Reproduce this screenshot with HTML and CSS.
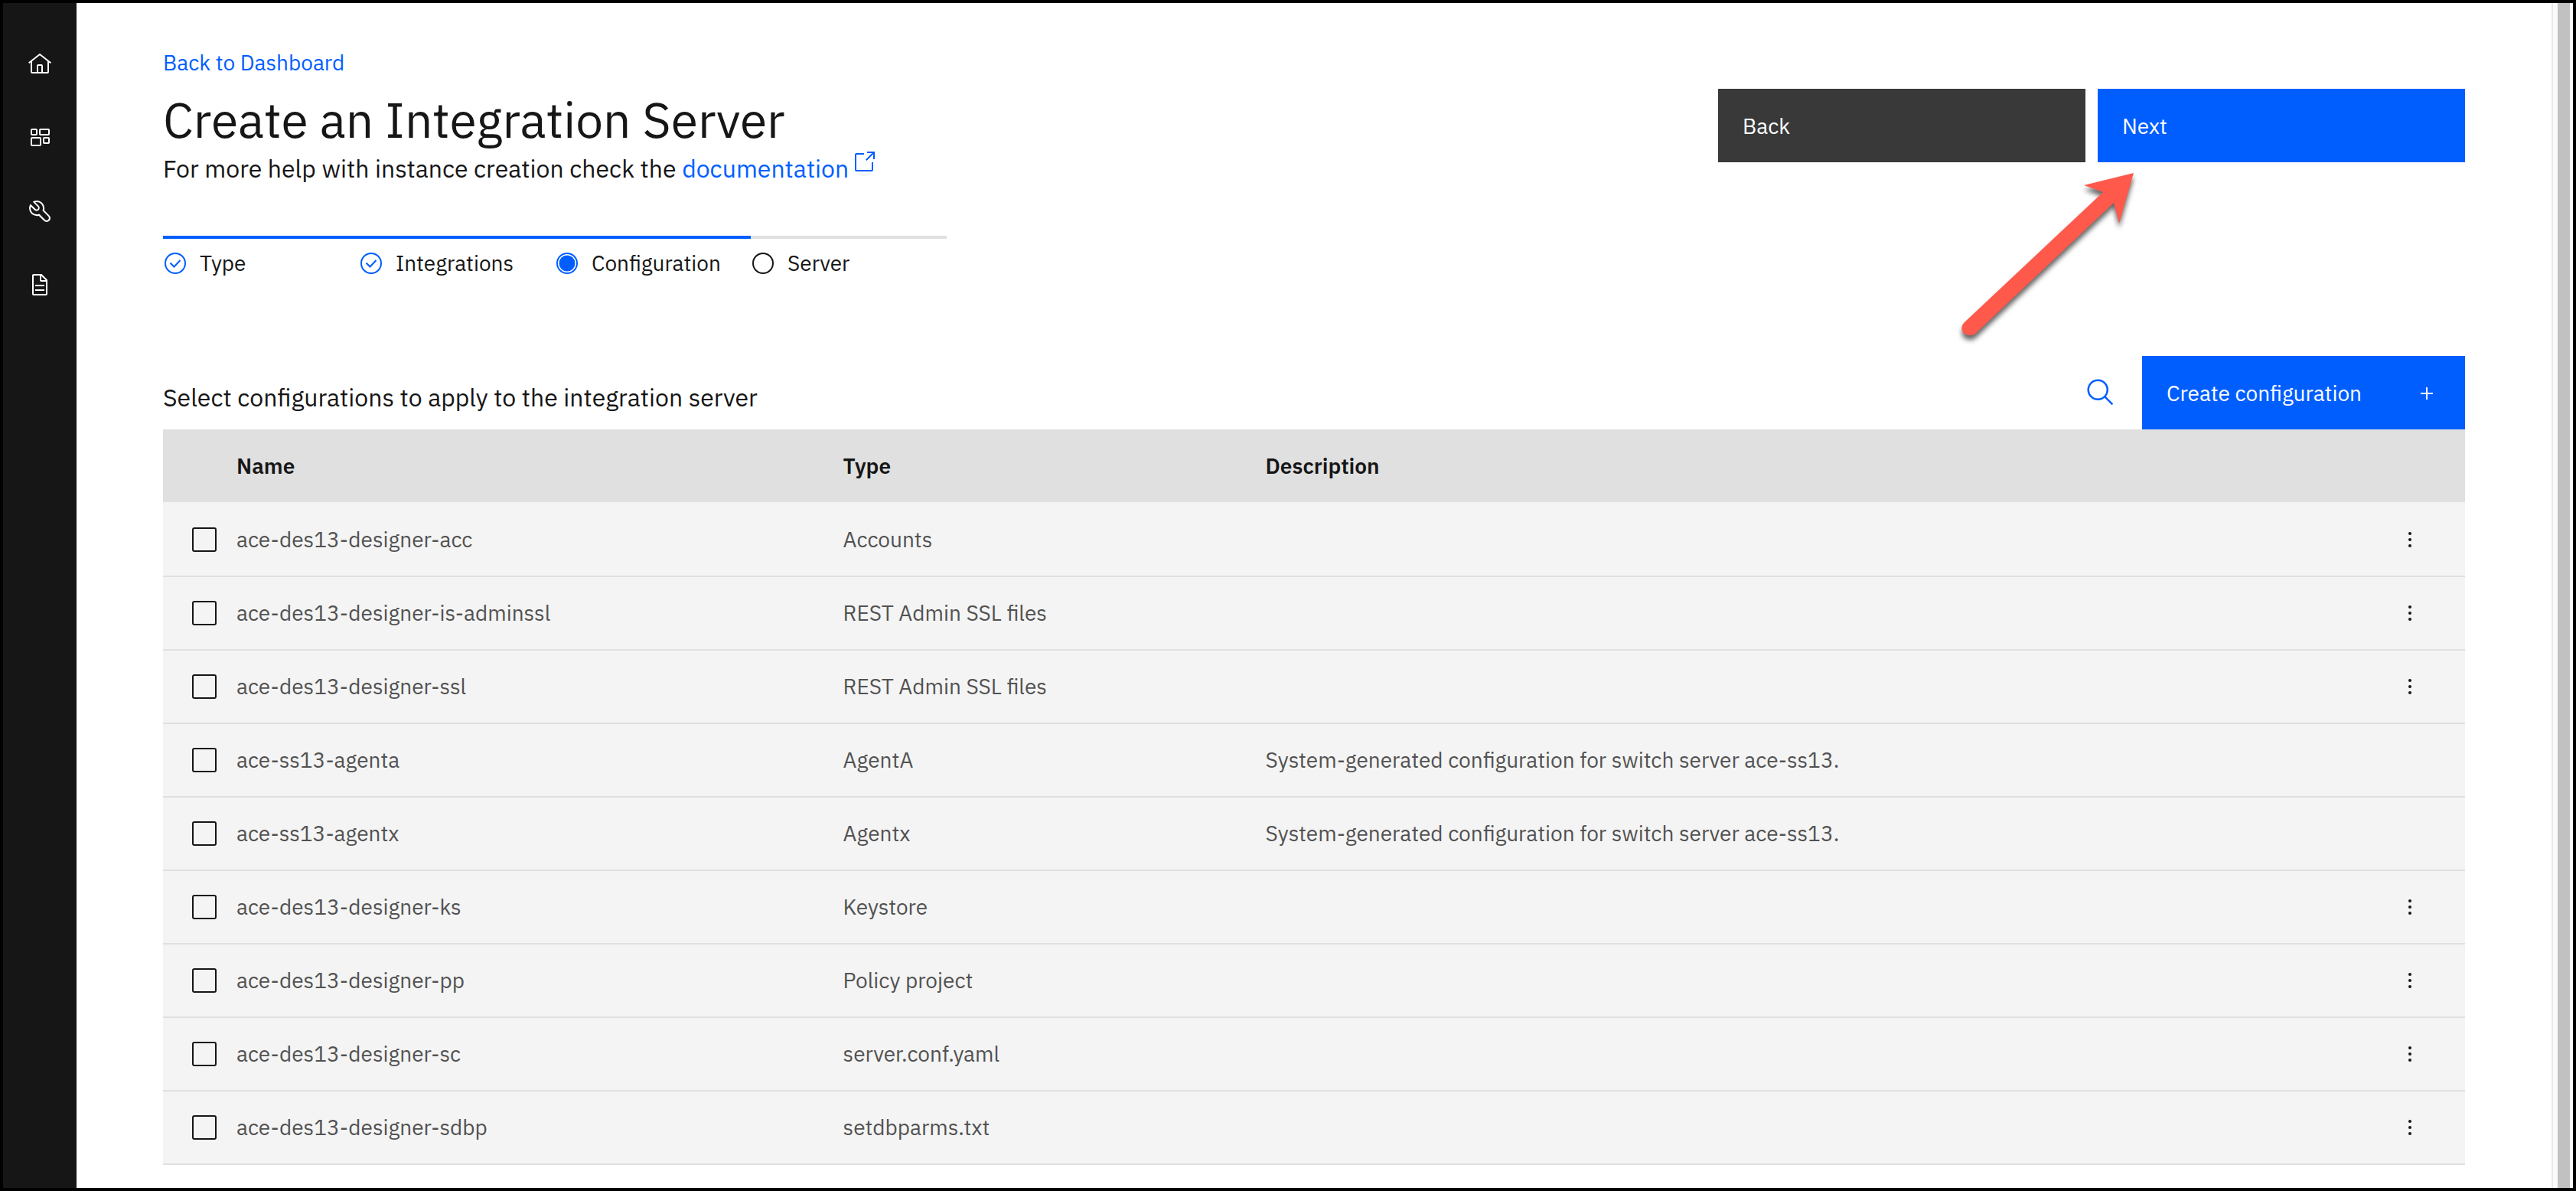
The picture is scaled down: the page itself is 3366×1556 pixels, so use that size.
FILE: index.html
```html
<!DOCTYPE html>
<html lang="en">
<head>
<meta charset="utf-8">
<title>Create an Integration Server</title>
<link rel="stylesheet" href="styles.css">
</head>
<body>
<svg class="sprite" aria-hidden="true">
  <symbol id="kebab" viewBox="0 0 32 32"><circle cx="16" cy="8" r="2"/><circle cx="16" cy="16" r="2"/><circle cx="16" cy="24" r="2"/></symbol>
  <symbol id="step-done" viewBox="0 0 32 32"><circle cx="16" cy="16" r="13" fill="none" stroke="currentColor" stroke-width="2"/><path d="M9.5 15.5l5 5L22.5 12" fill="none" stroke="currentColor" stroke-width="2"/></symbol>
</svg>
<div class="shell">
  <nav class="sidebar" aria-label="Main">
    <a href="#home" aria-label="Home"><svg class="icon" viewBox="0 0 32 32"><path d="M16.6123,2.2138a1.01,1.01,0,0,0-1.2427,0L1,13.4194l1.2427,1.5717L4,13.6209V26a2.0041,2.0041,0,0,0,2,2H26a2.0037,2.0037,0,0,0,2-2V13.63L29.7573,15,31,13.4282ZM18,26H14V18h4Zm2,0V18a2.0023,2.0023,0,0,0-2-2H14a2.002,2.002,0,0,0-2,2v8H6V12.0615l10-7.79,10,7.8005V26Z"/></svg></a>
    <a href="#dashboard" aria-label="Dashboard"><svg class="icon outline" viewBox="0 0 32 32"><rect x="5" y="5" width="7" height="7" rx="1"/><rect x="16" y="5" width="12" height="7" rx="1"/><rect x="5" y="16" width="12" height="10" rx="1"/><rect x="21" y="16" width="7" height="7" rx="1"/></svg></a>
    <a href="#tools" aria-label="Tools"><svg class="icon" viewBox="0 0 32 32"><path d="M12.1,2a9.8,9.8,0,0,0-5.4,1.6l6.4,6.4a2.1,2.1,0,0,1,.2,3,2.1,2.1,0,0,1-3-.2L3.7,6.4A9.84,9.84,0,0,0,2,12.1,10.14,10.14,0,0,0,12.1,22.2a10.9,10.9,0,0,0,2.6-.3l6.7,6.7a5,5,0,0,0,7.1-7.1l-6.7-6.7a10.9,10.9,0,0,0,.3-2.6A10,10,0,0,0,12.1,2Zm8,10.1a7.61,7.61,0,0,1-.3,2.1l-.3,1.1.8.8,6.7,6.7a2.88,2.88,0,0,1,.9,2.1A2.72,2.72,0,0,1,27,27a2.9,2.9,0,0,1-4.2,0l-6.7-6.7-.8-.8-1.1.3a7.61,7.61,0,0,1-2.1.3,8.27,8.27,0,0,1-5.7-2.3A7.63,7.63,0,0,1,4,12.1a8.33,8.33,0,0,1,.3-2.2l4.4,4.4a4.14,4.14,0,0,0,5.9.2,4.14,4.14,0,0,0-.2-5.9L10,4.2a6.45,6.45,0,0,1,2-.3,8.27,8.27,0,0,1,5.7,2.3A8.49,8.49,0,0,1,20.1,12.1Z"/></svg></a>
    <a href="#documents" aria-label="Documents"><svg class="icon" viewBox="0 0 32 32"><path d="M25.7,9.3l-7-7C18.5,2.1,18.3,2,18,2H8C6.9,2,6,2.9,6,4v24c0,1.1,0.9,2,2,2h16c1.1,0,2-0.9,2-2V10C26,9.7,25.9,9.5,25.7,9.3zM18,4.4l5.6,5.6H18V4.4zM24,28H8V4h8v6c0,1.1,0.9,2,2,2h6V28z"/><rect x="10" y="22" width="12" height="2"/><rect x="10" y="16" width="12" height="2"/></svg></a>
  </nav>

  <main class="content">
    <header class="page-header">
      <div class="intro">
        <a class="back-link" href="#dashboard">Back to Dashboard</a>
        <h1>Create an Integration Server</h1>
        <p class="help">For more help with instance creation check the <a href="#documentation">documentation <svg class="icon launch" viewBox="0 0 32 32"><path d="M26,28H6a2.0027,2.0027,0,0,1-2-2V6A2.0027,2.0027,0,0,1,6,4H16V6H6V26H26V16h2V26A2.0027,2.0027,0,0,1,26,28Z"/><path d="M20 2V4H26.586L18 12.586 19.414 14 28 5.414V12H30V2Z"/></svg></a></p>
      </div>
      <div class="actions">
        <button class="btn dark" type="button">Back</button>
        <button class="btn" type="button">Next</button>
        <svg class="pointer" viewBox="0 0 250 240" aria-hidden="true"><path d="M238 10L173 26L198 35L17 205C10 212 14 222 24 222C27 222 29 222 31 220L212 49L219 76Z"/></svg>
      </div>
    </header>

    <ol class="steps">
      <li class="done"><svg class="icon"><use href="#step-done"/></svg>Type</li>
      <li class="done"><svg class="icon"><use href="#step-done"/></svg>Integrations</li>
      <li class="done" aria-current="step"><svg class="icon" viewBox="0 0 32 32"><circle cx="16" cy="16" r="13" fill="none" stroke="currentColor" stroke-width="2"/><circle cx="16" cy="16" r="10.5"/></svg>Configuration</li>
      <li><svg class="icon" viewBox="0 0 32 32"><circle cx="16" cy="16" r="13" fill="none" stroke="currentColor" stroke-width="2"/></svg>Server</li>
    </ol>

    <section>
      <div class="toolbar">
        <h2>Select configurations to apply to the integration server</h2>
        <button class="search" type="button" aria-label="Search"><svg class="icon large" viewBox="0 0 32 32"><path d="M29,27.5859l-7.5521-7.5521a11.0177,11.0177,0,1,0-1.4141,1.4141L27.5859,29ZM4,13a9,9,0,1,1,9,9A9.01,9.01,0,0,1,4,13Z"/></svg></button>
        <button class="btn create" type="button">Create configuration<svg class="icon" viewBox="0 0 32 32"><path d="M17 15V8H15V15H8V17H15V24H17V17H24V15Z"/></svg></button>
      </div>
      <table>
        <colgroup><col class="col-check"><col class="col-name"><col class="col-type"><col><col class="col-menu"></colgroup>
        <thead><tr><th></th><th scope="col">Name</th><th scope="col">Type</th><th scope="col">Description</th><th></th></tr></thead>
        <tbody>
          <tr><td><input type="checkbox" id="c1"></td><td><label for="c1">ace-des13-designer-acc</label></td><td>Accounts</td><td></td><td><button class="menu" type="button" aria-label="Options"><svg class="icon"><use href="#kebab"/></svg></button></td></tr>
          <tr><td><input type="checkbox" id="c2"></td><td><label for="c2">ace-des13-designer-is-adminssl</label></td><td>REST Admin SSL files</td><td></td><td><button class="menu" type="button" aria-label="Options"><svg class="icon"><use href="#kebab"/></svg></button></td></tr>
          <tr><td><input type="checkbox" id="c3"></td><td><label for="c3">ace-des13-designer-ssl</label></td><td>REST Admin SSL files</td><td></td><td><button class="menu" type="button" aria-label="Options"><svg class="icon"><use href="#kebab"/></svg></button></td></tr>
          <tr><td><input type="checkbox" id="c4"></td><td><label for="c4">ace-ss13-agenta</label></td><td>AgentA</td><td>System-generated configuration for switch server ace-ss13.</td><td></td></tr>
          <tr><td><input type="checkbox" id="c5"></td><td><label for="c5">ace-ss13-agentx</label></td><td>Agentx</td><td>System-generated configuration for switch server ace-ss13.</td><td></td></tr>
          <tr><td><input type="checkbox" id="c6"></td><td><label for="c6">ace-des13-designer-ks</label></td><td>Keystore</td><td></td><td><button class="menu" type="button" aria-label="Options"><svg class="icon"><use href="#kebab"/></svg></button></td></tr>
          <tr><td><input type="checkbox" id="c7"></td><td><label for="c7">ace-des13-designer-pp</label></td><td>Policy project</td><td></td><td><button class="menu" type="button" aria-label="Options"><svg class="icon"><use href="#kebab"/></svg></button></td></tr>
          <tr><td><input type="checkbox" id="c8"></td><td><label for="c8">ace-des13-designer-sc</label></td><td>server.conf.yaml</td><td></td><td><button class="menu" type="button" aria-label="Options"><svg class="icon"><use href="#kebab"/></svg></button></td></tr>
          <tr><td><input type="checkbox" id="c9"></td><td><label for="c9">ace-des13-designer-sdbp</label></td><td>setdbparms.txt</td><td></td><td><button class="menu" type="button" aria-label="Options"><svg class="icon"><use href="#kebab"/></svg></button></td></tr>
        </tbody>
      </table>
    </section>
  </main>
  <div class="scroll-track" aria-hidden="true"></div>
</div>
</body>
</html>
```
FILE: styles.css
```css
* { box-sizing: border-box; }

body {
  margin: 0;
  color: #161616;
  background: #fff;
  font-family: "IBM Plex Sans", Roboto, sans-serif;
  font-size: 28px;
  line-height: 36px;
}

h1, h2, p, ol { margin: 0; font-weight: 400; }
a { color: #005eff; text-decoration: none; }
button { font: inherit; border: 0; padding: 0; background: none; cursor: pointer; }

.sprite { display: none; }
.icon { width: 32px; height: 32px; flex: none; fill: currentColor; }
.icon.large { width: 40px; height: 40px; }
.icon.outline { fill: none; stroke: currentColor; stroke-width: 2; }

.shell {
  display: flex;
  min-height: 100vh;
  border: 4px solid #000;
}

.sidebar {
  flex: 0 0 96px;
  padding-top: 32px;
  background: #161616;
}
.sidebar a {
  display: flex;
  align-items: center;
  justify-content: center;
  height: 96px;
  color: #fff;
}

.content { flex: 1; min-width: 0; padding: 60px 113px 24px; }

.page-header { display: flex; justify-content: space-between; }
.back-link { display: block; }
h1 { margin-top: 16px; font-size: 64px; line-height: 80px; }
.help { font-size: 32px; line-height: 48px; }
.launch { vertical-align: 4px; margin-left: -4px; }

.actions { position: relative; display: flex; gap: 16px; margin-top: 52px; }
.btn {
  display: flex;
  align-items: center;
  justify-content: space-between;
  width: 480px;
  height: 96px;
  padding: 2px 34px 0 32px;
  color: #fff;
  background: #005eff;
}
.btn.dark { background: #393939; }
.pointer {
  position: absolute;
  top: 100px;
  right: 421px;
  width: 250px;
  height: 240px;
  overflow: visible;
  fill: #ff594b;
  filter: drop-shadow(0 6px 3px rgba(0, 0, 0, .6));
  pointer-events: none;
}

.steps { display: flex; margin-top: 64px; padding: 0; list-style: none; }
.steps li {
  display: flex;
  align-items: center;
  gap: 16px;
  width: 256px;
  padding-top: 14px;
  border-top: 4px solid #e0e0e0;
}
.steps li.done { border-color: #005eff; }
.steps .done .icon { color: #005eff; }

.toolbar { display: flex; align-items: center; margin-top: 103px; }
h2 { flex: 1; padding-top: 12px; font-size: 32px; line-height: 48px; }
.search { display: flex; align-items: center; height: 96px; padding: 0 34px; color: #005eff; }
.btn.create { width: 422px; }

table { width: 100%; table-layout: fixed; border-collapse: separate; border-spacing: 0; }
.col-check { width: 96px; }
.col-name { width: 26.35%; }
.col-type { width: 18.35%; }
.col-menu { width: 144px; }
th, td { padding: 0; text-align: left; vertical-align: middle; }
th { height: 97px; font-weight: 600; background: #e0e0e0; border-bottom: 2px solid #f4f4f4; }
td { height: 96px; color: #525252; background: #f4f4f4; border-bottom: 2px solid #e0e0e0; }
input[type="checkbox"] {
  display: block;
  appearance: none;
  width: 32px;
  height: 32px;
  margin: 0 0 0 38px;
  border: 2px solid #161616;
  border-radius: 3px;
}
.menu { display: flex; align-items: center; justify-content: center; width: 100%; height: 94px; color: #161616; }

.scroll-track {
  flex: 0 0 28px;
  padding: 0 4px 0 6px;
  border-left: 2px solid #e8e8e8;
  background: #c1c1c1 content-box;
  box-shadow: inset 6px 0 #fafafa, inset -4px 0 #fafafa;
}
```
